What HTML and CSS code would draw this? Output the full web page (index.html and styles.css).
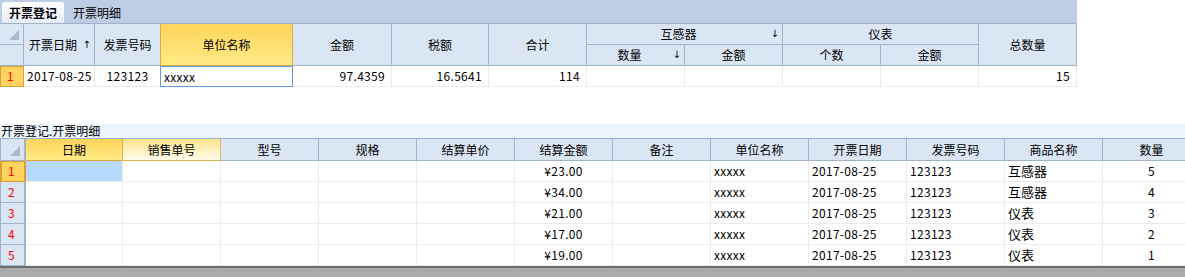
FILE: index.html
```html
<!DOCTYPE html>
<html lang="zh-CN">
<head>
  <meta charset="UTF-8">
  <title>开票登记</title>
  <link rel="stylesheet" href="styles.css">
</head>
<body>
  <div class="tabs">
    <span class="tab active">开票登记</span>
    <span class="tab">开票明细</span>
  </div>

  <!-- 主表：开票登记 -->
  <div class="grid master">
    <div class="cell hd corner"><svg width="10" height="10"><polygon points="10,0 10,10 0,10" fill="#a9bad0"/></svg></div>
    <div class="cell hd rs2 sorted">开票日期<span class="arrow">↑</span></div>
    <div class="cell hd rs2">发票号码</div>
    <div class="cell hd rs2 hot">单位名称</div>
    <div class="cell hd rs2">金额</div>
    <div class="cell hd rs2">税额</div>
    <div class="cell hd rs2">合计</div>
    <div class="cell hd cs2 sorted">互感器<span class="arrow">↓</span></div>
    <div class="cell hd cs2">仪表</div>
    <div class="cell hd rs2">总数量</div>
    <div class="cell hd"></div>
    <div class="cell hd sorted">数量<span class="arrow">↓</span></div>
    <div class="cell hd">金额</div>
    <div class="cell hd">个数</div>
    <div class="cell hd">金额</div>

    <div class="cell ind cur">1</div>
    <div class="cell td">2017-08-25</div>
    <div class="cell td center">123123</div>
    <div class="cell td edit">xxxxx</div>
    <div class="cell td num">97.4359</div>
    <div class="cell td num">16.5641</div>
    <div class="cell td num">114</div>
    <div class="cell td"></div>
    <div class="cell td"></div>
    <div class="cell td"></div>
    <div class="cell td"></div>
    <div class="cell td num">15</div>
  </div>

  <div class="caption">开票登记.开票明细</div>

  <!-- 明细表 -->
  <div class="detail-wrap">
    <div class="grid detail">
      <div class="cell hd corner ind-col"><svg width="10" height="10"><polygon points="10,0 10,10 0,10" fill="#a9bad0"/></svg></div>
      <div class="cell hd hot">日期</div>
      <div class="cell hd warm">销售单号</div>
      <div class="cell hd">型号</div>
      <div class="cell hd">规格</div>
      <div class="cell hd">结算单价</div>
      <div class="cell hd">结算金额</div>
      <div class="cell hd">备注</div>
      <div class="cell hd">单位名称</div>
      <div class="cell hd">开票日期</div>
      <div class="cell hd">发票号码</div>
      <div class="cell hd">商品名称</div>
      <div class="cell hd">数量</div>

      <div class="cell ind ind-col cur">1</div>
      <div class="cell td selected"></div>
      <div class="cell td"></div><div class="cell td"></div><div class="cell td"></div><div class="cell td"></div>
      <div class="cell td center">¥23.00</div>
      <div class="cell td"></div>
      <div class="cell td">xxxxx</div>
      <div class="cell td">2017-08-25</div>
      <div class="cell td">123123</div>
      <div class="cell td goods">互感器</div>
      <div class="cell td center">5</div>

      <div class="cell ind ind-col">2</div>
      <div class="cell td"></div>
      <div class="cell td"></div><div class="cell td"></div><div class="cell td"></div><div class="cell td"></div>
      <div class="cell td center">¥34.00</div>
      <div class="cell td"></div>
      <div class="cell td">xxxxx</div>
      <div class="cell td">2017-08-25</div>
      <div class="cell td">123123</div>
      <div class="cell td goods">互感器</div>
      <div class="cell td center">4</div>

      <div class="cell ind ind-col">3</div>
      <div class="cell td"></div>
      <div class="cell td"></div><div class="cell td"></div><div class="cell td"></div><div class="cell td"></div>
      <div class="cell td center">¥21.00</div>
      <div class="cell td"></div>
      <div class="cell td">xxxxx</div>
      <div class="cell td">2017-08-25</div>
      <div class="cell td">123123</div>
      <div class="cell td goods">仪表</div>
      <div class="cell td center">3</div>

      <div class="cell ind ind-col">4</div>
      <div class="cell td"></div>
      <div class="cell td"></div><div class="cell td"></div><div class="cell td"></div><div class="cell td"></div>
      <div class="cell td center">¥17.00</div>
      <div class="cell td"></div>
      <div class="cell td">xxxxx</div>
      <div class="cell td">2017-08-25</div>
      <div class="cell td">123123</div>
      <div class="cell td goods">仪表</div>
      <div class="cell td center">2</div>

      <div class="cell ind ind-col">5</div>
      <div class="cell td"></div>
      <div class="cell td"></div><div class="cell td"></div><div class="cell td"></div><div class="cell td"></div>
      <div class="cell td center">¥19.00</div>
      <div class="cell td"></div>
      <div class="cell td">xxxxx</div>
      <div class="cell td">2017-08-25</div>
      <div class="cell td">123123</div>
      <div class="cell td goods">仪表</div>
      <div class="cell td center">1</div>
    </div>
  </div>

  <div class="statusbar"></div>
</body>
</html>
```

FILE: styles.css
```css
body, html {
  margin: 0;
  padding: 0;
  width: 100%;
  height: 100%;
  overflow: hidden;
  background: #fff;
  font-family: "Noto Sans CJK SC", "Liberation Sans", sans-serif;
  font-size: 12px;
  color: #000;
}

.tabs {
  width: 1077px;
  height: 24px;
  box-sizing: border-box;
  background: #bccde4;
  border-bottom: 1px solid #a0b3cb;
  display: flex;
  align-items: flex-end;
  padding-left: 2px;
}

.tab {
  height: 21px;
  line-height: 21px;
  padding: 0 9px;
}

.tab.active {
  padding: 0 7px;
  font-weight: bold;
  background: linear-gradient(#ffffff, #e6edf6);
  border-radius: 3px 3px 0 0;
}

.grid {
  display: grid;
}

.master {
  width: 1077px;
  grid-template-columns: 24px 71px 66px 132px 99px 97px repeat(6, 98px);
  grid-template-rows: 21px 21px 21px;
}

.cell {
  box-sizing: border-box;
  border-right: 1px solid #ebebeb;
  border-bottom: 1px solid #ebebeb;
  display: flex;
  align-items: center;
  overflow: hidden;
  white-space: nowrap;
  line-height: 14px;
}

.rs2 { grid-row: span 2; }
.cs2 { grid-column: span 2; }

.hd {
  position: relative;
  justify-content: center;
  background: #dae6f4;
  border-color: #a0b4cc;
}

.hd.corner {
  justify-content: flex-end;
  align-items: flex-end;
  padding: 0 4px 4px 0;
}

.hd.sorted {
  padding-right: 12px;
}

.arrow {
  position: absolute;
  right: 3px;
  top: 50%;
  transform: translateY(-50%);
  font-family: "DejaVu Sans", sans-serif;
  font-size: 10px;
  color: #000;
}

.hd.hot {
  margin-left: -1px;
  border-left: 1px solid #dfa73c;
  border-right-color: #dfa73c;
  border-bottom-color: #dfa73c;
  background: linear-gradient(#ffd45c, #ffea84);
}

.hd.warm {
  border-right-color: #e3b451;
  border-bottom-color: #e3b451;
  background: linear-gradient(#ffe48c, #fffbeb);
}

.td {
  background: #fff;
  padding: 0 3px;
  letter-spacing: 0.3px;
}

.td.num { justify-content: flex-end; padding-right: 6px; }
.td.center { justify-content: center; }

.td.edit {
  margin-left: -1px;
  border: 1px solid #5c9ce2;
  padding-left: 3px;
}

.td.selected {
  background: #b7d9fb;
}

.td.goods {
  font-size: 13px;
  letter-spacing: 0;
}

.ind {
  background: #dae6f4;
  border-color: #a0b4cc;
  color: #f00;
  padding-left: 7px;
}

.ind.cur {
  background: #ffd45e;
  border-color: #d99f3a;
  box-shadow: inset 1px 1px 0 #d99f3a;
}

.caption {
  margin-top: 37px;
  height: 15px;
  box-sizing: border-box;
  background: #eef5fd;
  border-bottom: 1px solid #8db1e2;
  padding-left: 1px;
  line-height: 14px;
}

.detail-wrap {
  overflow: hidden;
}

.detail {
  width: 1201px;
  grid-template-columns: 26px 97px repeat(11, 98px);
  grid-template-rows: 22px repeat(5, 21px);
}

.ind-col {
  border-left: 1px solid #a0b4cc;
  border-right-width: 2px;
}

.ind-col.cur {
  border-left-color: #d99f3a;
}

.detail .hd.hot {
  margin-left: 0;
  border-left: none;
}

.statusbar {
  height: 11px;
  background: #aaaaaa;
  border-top: 2px solid #6c6c6c;
}
```
